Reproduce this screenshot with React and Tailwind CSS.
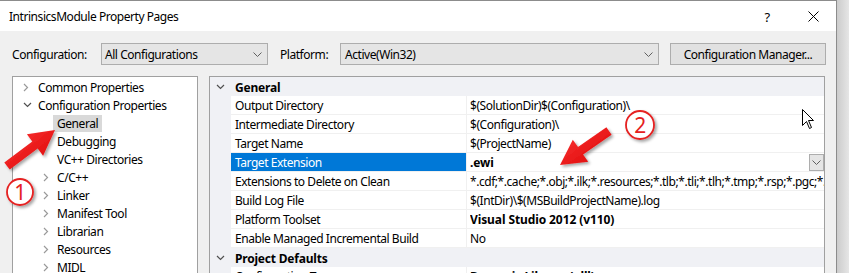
import React from "react";

const ChevRight = ({ color = "#9a9a9a" }) => (
  <svg width="6" height="9" viewBox="0 0 6 9" className="block">
    <polyline points="1,1 4.5,4.5 1,8" fill="none" stroke={color} strokeWidth="1.2" />
  </svg>
);
const ChevDown = ({ color = "#404040" }) => (
  <svg width="9" height="6" viewBox="0 0 9 6" className="block">
    <polyline points="1,1 4.5,4.5 8,1" fill="none" stroke={color} strokeWidth="1.2" />
  </svg>
);
const DropChev = () => (
  <svg width="9" height="5" viewBox="0 0 9 5" className="block">
    <polyline points="0.5,0.5 4.5,4.5 8.5,0.5" fill="none" stroke="#606060" strokeWidth="1" />
  </svg>
);

const tree = [
  { label: "Common Properties", level: 0, chev: "right" },
  { label: "Configuration Properties", level: 0, chev: "down" },
  { label: "General", level: 1, sel: true },
  { label: "Debugging", level: 1 },
  { label: "VC++ Directories", level: 1 },
  { label: "C/C++", level: 1, chev: "right" },
  { label: "Linker", level: 1, chev: "right" },
  { label: "Manifest Tool", level: 1, chev: "right" },
  { label: "Librarian", level: 1, chev: "right" },
  { label: "Resources", level: 1, chev: "right" },
  { label: "MIDL", level: 1, chev: "right" },
];

const rows = [
  { header: "General" },
  { name: "Output Directory", value: "$(SolutionDir)$(Configuration)\\" },
  { name: "Intermediate Directory", value: "$(Configuration)\\" },
  { name: "Target Name", value: "$(ProjectName)" },
  { name: "Target Extension", value: ".ewi", bold: true, sel: true },
  {
    name: "Extensions to Delete on Clean",
    value: "*.cdf;*.cache;*.obj;*.ilk;*.resources;*.tlb;*.tli;*.tlh;*.tmp;*.rsp;*.pgc;*.pgd;*.meta;*.tlog;*.manifest",
  },
  { name: "Build Log File", value: "$(IntDir)\\$(MSBuildProjectName).log" },
  { name: "Platform Toolset", value: "Visual Studio 2012 (v110)", bold: true },
  { name: "Enable Managed Incremental Build", value: "No" },
  { header: "Project Defaults" },
  { name: "Configuration Type", value: "Dynamic Library (.dll)", bold: true },
];

function arrowPoints(x0, y0, x1, y1, sw, hw, hl) {
  const dx = x1 - x0, dy = y1 - y0;
  const L = Math.hypot(dx, dy);
  const ux = dx / L, uy = dy / L;
  const nx = -uy, ny = ux;
  const bx = x1 - ux * hl, by = y1 - uy * hl;
  const p = [
    [x0 + nx * sw / 2, y0 + ny * sw / 2],
    [bx + nx * sw / 2, by + ny * sw / 2],
    [bx + nx * hw / 2, by + ny * hw / 2],
    [x1, y1],
    [bx - nx * hw / 2, by - ny * hw / 2],
    [bx - nx * sw / 2, by - ny * sw / 2],
    [x0 - nx * sw / 2, y0 - ny * sw / 2],
  ];
  return p.map((q) => q[0].toFixed(1) + "," + q[1].toFixed(1)).join(" ");
}

function Overlay() {
  return (
    <svg className="absolute left-0 top-0 pointer-events-none" width="849" height="273" viewBox="0 0 849 273">
      <defs>
        <filter id="sh" x="-30%" y="-30%" width="160%" height="160%">
          <feDropShadow dx="2" dy="2" stdDeviation="1.6" floodColor="#000" floodOpacity="0.35" />
        </filter>
        <linearGradient id="rg1" x1="0" y1="0" x2="1" y2="1">
          <stop offset="0" stopColor="#ff3a3a" />
          <stop offset="1" stopColor="#d80000" />
        </linearGradient>
      </defs>
      <polygon points={arrowPoints(7, 166, 55, 130, 9, 27, 25)} fill="url(#rg1)" filter="url(#sh)" />
      <polygon points={arrowPoints(609, 131, 560, 165, 9, 27, 25)} fill="url(#rg1)" filter="url(#sh)" />
      <g filter="url(#sh)">
        <circle cx="20" cy="192" r="13" fill="#ffffff" stroke="#e52020" strokeWidth="1.8" />
        <circle cx="640" cy="125" r="14" fill="#ffffff" stroke="#e52020" strokeWidth="1.8" />
      </g>
      <text x="20" y="199.5" textAnchor="middle" fontFamily="Noto Sans, sans-serif" fontSize="21" fill="#e52020">1</text>
      <text x="640" y="132.5" textAnchor="middle" fontFamily="Noto Sans, sans-serif" fontSize="21" fill="#e52020">2</text>
      <path
        d="M802.5,109.5 L802.5,125.5 L806.5,121.5 L809.5,128.5 L811.5,127.5 L808.5,120.5 L813.5,120.5 Z"
        fill="#ffffff"
        stroke="#000000"
        strokeWidth="1"
        strokeLinejoin="miter"
      />
    </svg>
  );
}

export default function App() {
  return (
    <div className="relative w-[849px] h-[273px] overflow-hidden flex bg-[#e4e4e4] font-['Noto_Sans',sans-serif] text-[12px] tracking-[-0.45px] text-black leading-[16px]">
      <div className="w-[837px] h-full flex flex-col bg-[#f0f0f0] border-t border-r border-[#8c8c8c] shrink-0">
        {/* Title bar */}
        <div className="h-[30px] bg-white flex items-center shrink-0">
          <div className="pl-[9px] pt-[2px] flex-1">IntrinsicsModule Property Pages</div>
          <div className="w-[46px] h-full flex items-center justify-center text-[13px] pt-[1px]">?</div>
          <div className="w-[46px] h-full flex items-center justify-center">
            <svg width="11" height="11" viewBox="0 0 11 11">
              <line x1="0.5" y1="0.5" x2="10.5" y2="10.5" stroke="#000" strokeWidth="1" />
              <line x1="10.5" y1="0.5" x2="0.5" y2="10.5" stroke="#000" strokeWidth="1" />
            </svg>
          </div>
        </div>
        {/* Toolbar */}
        <div className="flex items-center pt-[12px] pl-[12px] shrink-0">
          <div className="w-[89px] pt-[2px]">Configuration:</div>
          <div className="w-[167px] h-[22px] bg-[#e5e5e5] border border-[#adadad] flex items-center pl-[3px] pr-[5px]">
            <span className="flex-1 pt-[2px]">All Configurations</span>
            <DropChev />
          </div>
          <div className="w-[60px] ml-[12px] pt-[2px]">Platform:</div>
          <div className="w-[319px] h-[22px] bg-[#e5e5e5] border border-[#adadad] flex items-center pl-[4px] pr-[5px]">
            <span className="flex-1 pt-[2px]">Active(Win32)</span>
            <DropChev />
          </div>
          <div className="w-[156px] h-[22px] ml-[11px] bg-[#e1e1e1] border border-[#adadad] flex items-center justify-center pt-[2px]">
            Configuration Manager...
          </div>
        </div>
        {/* Panels */}
        <div className="flex mt-[11px] pl-[12px] gap-[11px] flex-1 min-h-0">
          <div className="w-[186px] h-[220px] bg-white border border-[#a0a0a0] pt-[1px] shrink-0">
            {tree.map((t, i) => (
              <div key={i} className={"h-[18px] flex items-center " + (t.level === 0 ? "pl-[9px]" : "pl-[28px]")}>
                <div className={"w-[12px] flex items-center " + (t.level === 0 ? "pl-[1px]" : "pl-[2px]")}>
                  {t.chev === "right" && <ChevRight />}
                  {t.chev === "down" && <ChevDown color="#505050" />}
                </div>
                <span className={"px-[4px] h-[17px] flex items-center pt-[1px] " + (t.sel ? "bg-[#d9d9d9]" : "")}>{t.label}</span>
              </div>
            ))}
          </div>
          <div className="w-[616px] h-[220px] bg-white border border-[#a0a0a0] shrink-0 flex">
            <div className="w-[21px] bg-[#f0f1f5] shrink-0 flex flex-col">
              {rows.map((r, i) =>
                r.header ? (
                  <div key={i} className="h-[19px] flex items-center justify-center">
                    <ChevDown color="#505050" />
                  </div>
                ) : (
                  <div key={i} className="h-[19px]" />
                )
              )}
            </div>
            <div className="flex-1 min-w-0 flex flex-col">
              {rows.map((r, i) =>
                r.header ? (
                  <div key={i} className="h-[19px] shrink-0 bg-[#f0f1f5] flex items-center pl-[4px] pt-[2px] font-bold tracking-[-0.2px]">
                    {r.header}
                  </div>
                ) : (
                  <div key={i} className="h-[19px] flex border-b border-[#f0f0f0] shrink-0">
                    <div
                      className={
                        "w-[236px] shrink-0 flex items-center pl-[4px] pt-[2px] border-r border-[#f0f0f0] " +
                        (r.sel ? "bg-[#0078d7] text-white" : "")
                      }
                    >
                      {r.name}
                    </div>
                    <div className="flex-1 min-w-0 flex items-center pl-[3px]">
                      <span
                        className={
                          "flex-1 min-w-0 whitespace-nowrap overflow-hidden pt-[2px] " +
                          (r.bold ? "font-bold tracking-[-0.1px]" : "")
                        }
                      >
                        {r.value}
                      </span>
                      {r.sel && (
                        <div className="w-[15px] h-[17px] bg-[#e5e5e5] border border-[#adadad] flex items-center justify-center shrink-0">
                          <DropChev />
                        </div>
                      )}
                    </div>
                  </div>
                )
              )}
            </div>
          </div>
        </div>
      </div>
      <div className="flex-1 bg-gradient-to-r from-[#cccccc] to-[#e6e6e6]" />
      <Overlay />
    </div>
  );
}
